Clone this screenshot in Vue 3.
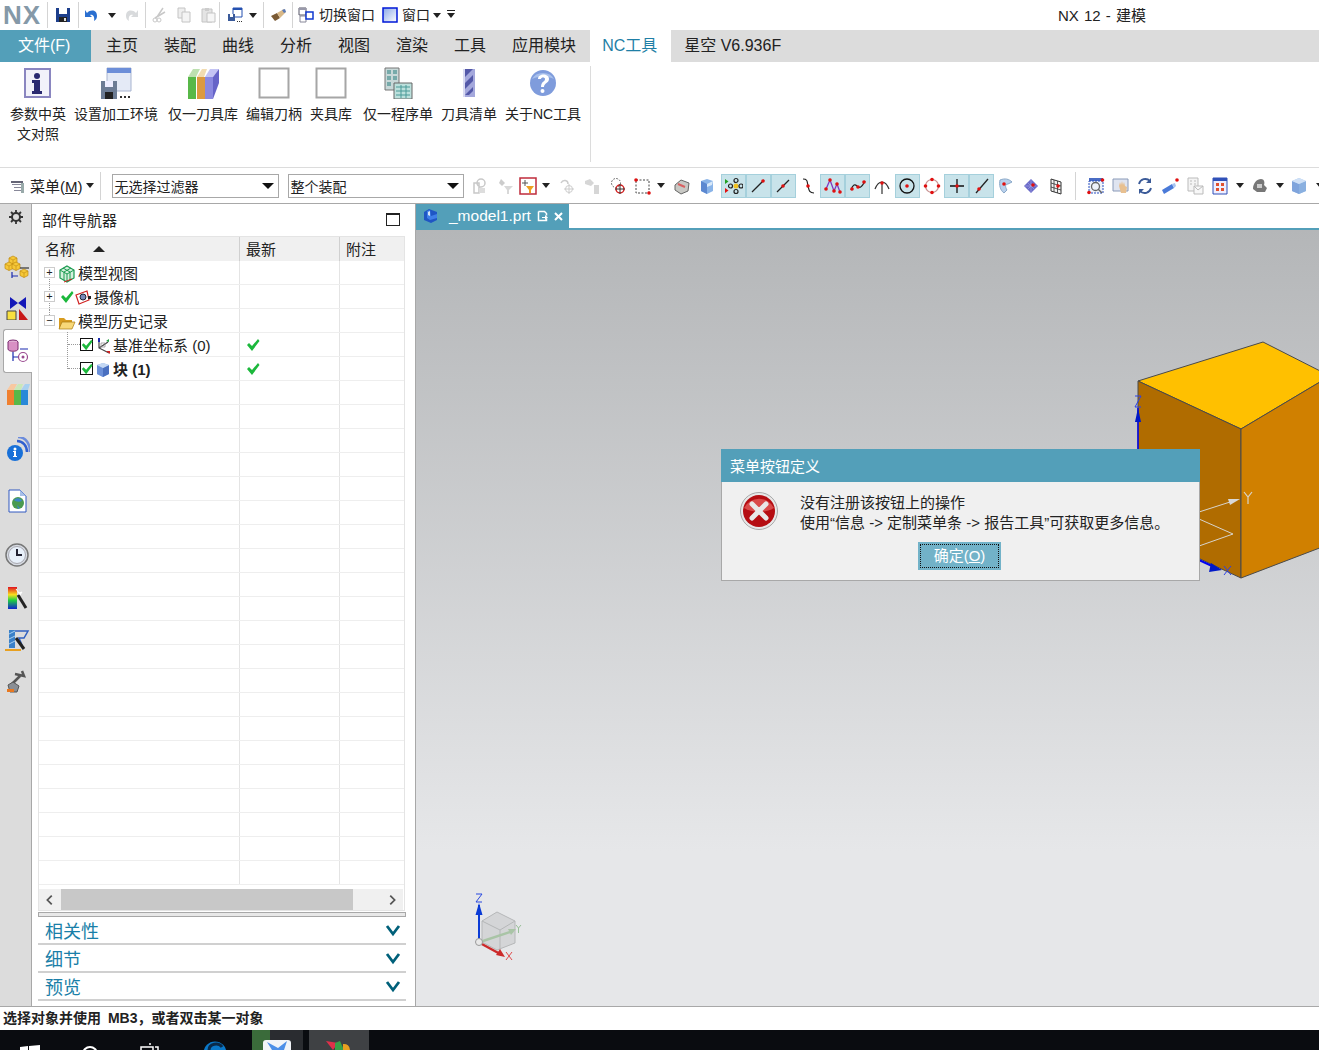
<template>
  <div class="app">
    <!-- title row -->
    <div class="title-row">
      <span class="nx">NX</span>
      <i class="vsep"></i>
      <span class="qa" style="width:30px" v-html="svg(qa.save, 16)"></span>
      <i class="vsep"></i>
      <span class="qa" style="width:26px" v-html="svg(qa.undo, 16)"></span>
      <span class="caret" style="margin:0 1px 0 3px"></span>
      <span class="qa" style="width:28px" v-html="svg(qa.redo, 16)"></span>
      <i class="vsep"></i>
      <span class="qa" style="width:26px" v-html="svg(qa.cut, 16)"></span>
      <span class="qa" style="width:24px" v-html="svg(qa.copy, 16)"></span>
      <span class="qa" style="width:23px" v-html="svg(qa.paste, 16)"></span>
      <i class="vsep"></i>
      <span class="qa" style="width:29px" v-html="svg(qa.win, 16)"></span>
      <span class="caret"></span>
      <i class="vsep" style="margin-left:6px"></i>
      <span class="qa" style="width:28px" v-html="svg(qa.brush, 16)"></span>
      <i class="vsep"></i>
      <span class="qa" style="width:26px" v-html="svg(qa.sw, 16)"></span>
      <span class="qa-label">切换窗口</span>
      <span class="qa" style="width:16px;margin-left:7px" v-html="svg(qa.window, 16)"></span>
      <span class="qa-label" style="margin-left:4px">窗口</span>
      <span class="caret" style="margin-left:3px"></span>
      <span class="caret under" style="margin-left:6px"></span>
      <span class="app-title">NX 12 - 建模</span>
    </div>

    <!-- ribbon tabs -->
    <div class="tabs">
      <div class="tab file">文件(F)</div>
      <div class="tab-list">
        <div v-for="t in tabs" :key="t" class="tab" :class="{ active: t === 'NC工具' }">{{ t }}</div>
      </div>
    </div>

    <!-- ribbon -->
    <div class="ribbon">
      <div class="ribbon-group">
        <div v-for="b in ribbon" :key="b.label" class="rb" :style="{ width: b.w + 'px', marginLeft: (b.ml || 0) + 'px' }">
          <span class="rb-icon" v-html="svg(b.icon, 32, 32)"></span>
          <span class="rb-label" :class="{ one: !b.wrap }">{{ b.label }}</span>
        </div>
      </div>
      <i class="ribbon-sep"></i>
    </div>

    <!-- selection bar -->
    <div class="selbar">
      <span class="cell menu-ico" v-html="svg(tb.menu, 18)"></span>
      <span class="menu-label">菜单(<u>M</u>)</span>
      <span class="caret" style="margin-left:3px"></span>
      <i class="vsep tall"></i>
      <div class="combo" style="width:167px">无选择过滤器<span class="caret big"></span></div>
      <div class="combo" style="width:176px;margin-left:9px">整个装配<span class="caret big"></span></div>
      <div class="tools">
        <template v-for="(c, i) in cells" :key="i">
          <i v-if="c === '|'" class="vsep tall2"></i>
          <span v-else-if="c === 'v'" class="caret dd"></span>
          <span v-else-if="c === 'V'" class="caret dd wide"></span>
          <span v-else class="cell" :class="{ on: c.on }" :style="c.m ? { marginLeft: c.m + 'px' } : null" v-html="svg(tb[c.n], 18)"></span>
        </template>
      </div>
    </div>

    <div class="main">
      <!-- resource bar -->
      <div class="rail">
        <span class="rail-item gear" v-html="svg(rail.gear, 16)"></span>
        <span class="rail-item" style="margin-top:30px" v-html="svg(rail.asm, 26, 24)"></span>
        <span class="rail-item" style="margin-top:17px" v-html="svg(rail.constraint, 26, 24)"></span>
        <span class="rail-item current" style="margin-top:9px" v-html="svg(rail.part, 26, 24)"></span>
        <span class="rail-item" style="margin-top:9px" v-html="svg(rail.lib, 26, 24)"></span>
        <span class="rail-item" style="margin-top:31px" v-html="svg(rail.info, 26, 24)"></span>
        <span class="rail-item" style="margin-top:28px" v-html="svg(rail.web, 26, 24)"></span>
        <span class="rail-item" style="margin-top:30px" v-html="svg(rail.clock, 26, 24)"></span>
        <span class="rail-item" style="margin-top:19px" v-html="svg(rail.color, 26, 24)"></span>
        <span class="rail-item" style="margin-top:18px" v-html="svg(rail.mill, 26, 24)"></span>
        <span class="rail-item" style="margin-top:18px" v-html="svg(rail.robot, 26, 24)"></span>
      </div>

      <!-- part navigator -->
      <div class="nav">
        <div class="nav-head">
          <span>部件导航器</span>
          <span class="maximize"></span>
        </div>
        <div class="tree">
          <div class="tree-row tree-header">
            <div class="c name">名称<span class="sort"></span></div>
            <div class="c">最新</div>
            <div class="c">附注</div>
          </div>
          <div v-for="(r, i) in rows" :key="i" class="tree-row">
            <div class="c name" :style="{ paddingLeft: (r.pad || 0) + 'px' }">
              <template v-if="r.text">
                <i v-if="r.guide" class="guide" :class="r.guide"></i>
                <span v-if="r.box" class="expander">{{ r.box }}</span>
                <span v-if="r.check" class="tick" v-html="svg(rail.tick, 14)"></span>
                <span v-if="r.sq" class="checkbox" v-html="svg(rail.tick, 12)"></span>
                <span class="node-icon" v-html="svg(r.icon, 18)"></span>
                <span :class="{ strong: r.strong }" :style="{ marginLeft: (r.tx || 2) + 'px' }">{{ r.text }}</span>
              </template>
            </div>
            <div class="c">
              <span v-if="r.latest" class="latest" v-html="svg(rail.tick, 14)"></span>
            </div>
            <div class="c"></div>
          </div>
          <div class="hscroll">
            <span class="sb-arrow"><svg width="14" height="14" viewBox="0 0 16 16"><path d="M10 3 5 8l5 5" fill="none" stroke="#555" stroke-width="2" /></svg></span>
            <div class="sb-track"><div class="sb-thumb"></div></div>
            <span class="sb-arrow"><svg width="14" height="14" viewBox="0 0 16 16"><path d="M6 3l5 5-5 5" fill="none" stroke="#555" stroke-width="2" /></svg></span>
          </div>
        </div>
        <div class="splitter"></div>
        <div v-for="s in sections" :key="s" class="section">
          <span>{{ s }}</span>
          <svg width="16" height="13" viewBox="0 0 16 13"><path d="M2 2l6 8 6-8" fill="none" stroke="#00607a" stroke-width="2.8" /></svg>
        </div>
      </div>

      <!-- graphics window -->
      <div class="work">
        <div class="doc-tabs">
          <div class="doc-tab">
            <span class="doc-icon" v-html="svg(qa.blockDoc, 16)"></span>
            <span>_model1.prt</span>
            <svg class="doc-mark" width="12" height="12" viewBox="0 0 12 12"><path d="M1.500 1.500h6l2 2v2M9.500 8.500v2h-8v-9" fill="none" stroke="#fff" stroke-width="1.500" /><path d="M5 7h3V5l3 2.500L8 10V8H5z" fill="#fff" /></svg>
            <svg width="11" height="11" viewBox="0 0 11 11"><path d="M2 2l7 7M9 2l-7 7" stroke="#fff" stroke-width="2" /></svg>
          </div>
        </div>
        <div class="viewport">
          <!-- model: coordinates are the content of the canvas -->
          <svg class="scene" width="903" height="776" viewBox="416 230 903 776">
            <path d="M1138 381 1263 342 1330 376 1241 429z" fill="#ffc000" stroke="#4a4a4a" stroke-width="1" />
            <path d="M1138 381 1241 429V578L1138 530z" fill="#b06c00" stroke="#4a4a4a" stroke-width="1" />
            <path d="M1241 429 1330 376V544L1241 578z" fill="#d08000" stroke="#4a4a4a" stroke-width="1" />
            <path d="M1138 408V450" stroke="#0000f0" stroke-width="1.5" />
            <path d="M1138 408 1135 422H1141z" fill="#0018c8" />
            <path d="M1135 396h6l-6 11h6" fill="none" stroke="#2a40e8" stroke-width="1" />
            <path d="M1199 512 1230 502" stroke="#d8d4cc" stroke-width="1" />
            <path d="M1228 499 1240 499 1230 505z" fill="#d8d8d8" />
            <path d="M1199 519 1233 534 1199 546" fill="none" stroke="#d8d4cc" stroke-width="1" />
            <path d="M1244 492l4 5 4-5M1248 497v7" fill="none" stroke="#d8d4cc" stroke-width="1.200" />
            <path d="M1199 560 1212 566" stroke="#0000f0" stroke-width="2" />
            <path d="M1211 563 1222 570 1209 572z" fill="#0018c8" />
            <path d="M1224 566 1231 575M1231 566 1224 575" stroke="#2a40e8" stroke-width="1" />

            <!-- triad -->
            <path d="M482 921 497 912 515 921V943L497 950 482 942z" fill="#cfd1d2" fill-opacity=".8" stroke="#b5b7b8" />
            <path d="M482 921 500 930 515 921M500 930V950" fill="none" stroke="#b5b7b8" />
            <path d="M480 942 513 931" stroke="#a9c4a6" stroke-width="2.500" />
            <path d="M508 929 516 929 511 935z" fill="#a9c4a6" />
            <path d="M516 925l2.500 3 2.500-3M518.500 928v5" fill="none" stroke="#98bf98" stroke-width="1" />
            <path d="M479 942V905" stroke="#0a3bd6" stroke-width="2" />
            <path d="M479 903 475.500 915H482.500z" fill="#0a3bd6" />
            <path d="M476 894h6l-6 8h6" fill="none" stroke="#2848e0" stroke-width="1" />
            <path d="M480 943 502 955" stroke="#cc2a2a" stroke-width="2.500" />
            <path d="M505 957 496 955 500 949z" fill="#cc2a2a" />
            <path d="M506 952 512 960M512 952 506 960" stroke="#e04a4a" stroke-width="1" />
            <circle cx="479" cy="942" r="3.500" fill="#e8e8e8" stroke="#999" />
          </svg>

          <!-- message box -->
          <div class="dialog">
            <div class="dialog-title">菜单按钮定义</div>
            <div class="dialog-body">
              <svg class="err" width="40" height="40" viewBox="0 0 40 40">
                <circle cx="20" cy="20" r="18.500" fill="#e8e8e8" stroke="#a8a8a8" />
                <circle cx="20" cy="20" r="16" fill="#b50d12" />
                <path d="M5 17a16 14 0 0 1 30 0c-8 5-22 5-30 0z" fill="#d94a4a" />
                <path d="M13 13l14 14M27 13 13 27" stroke="#e8e8e8" stroke-width="5" stroke-linecap="round" />
              </svg>
              <div class="dialog-text">
                <div>没有注册该按钮上的操作</div>
                <div>使用“信息 -&gt; 定制菜单条 -&gt; 报告工具”可获取更多信息。</div>
              </div>
            </div>
            <div class="dialog-actions">
              <button class="ok"><span>确定(<u>O</u>)</span></button>
            </div>
          </div>
        </div>
      </div>
    </div>

    <div class="status">选择对象并使用 MB3，或者双击某一对象</div>

    <!-- taskbar, cut off by the capture -->
    <div class="taskbar">
      <svg class="tk" style="left:20px;top:15px" width="20" height="8" viewBox="0 0 20 8"><path d="M0 2 8 1v8H0zM9 1l11-1v9H9z" fill="#fff" /></svg>
      <svg class="tk" style="left:81px;top:15px" width="18" height="8" viewBox="0 0 18 8"><circle cx="9" cy="9" r="7" fill="none" stroke="#fff" stroke-width="2" /></svg>
      <svg class="tk" style="left:140px;top:12px" width="20" height="8" viewBox="0 0 20 8"><path d="M1 8V5h12V8M9 2h2M15 5h3v3" fill="none" stroke="#fff" stroke-width="1.500" /></svg>
      <svg class="tk" style="left:203px;top:11px" width="24" height="9" viewBox="0 0 24 9"><circle cx="12" cy="12" r="11.500" fill="#0a78c8" /><path d="M6 9a7 6 0 0 1 13-3" fill="none" stroke="#0a2a48" stroke-width="3" /></svg>
      <div class="tk-app mail">
        <svg width="30" height="20" viewBox="0 0 30 20"><rect x="1" y="10" width="28" height="16" rx="3" fill="#f2f4f8" /><path d="M5 12l11 6 9-7-3 9h-12z" fill="#4d8fe8" /></svg>
      </div>
      <div class="tk-app nxapp">
        <svg width="34" height="20" viewBox="0 0 34 20"><path d="M4 11l12 2-5 7z" fill="#e0304a" /><path d="M13 13l5-2 4 9h-9z" fill="#38a048" /><path d="M21 14a6 6 0 0 1 7 6h-7z" fill="#e8a020" /></svg>
      </div>
    </div>
  </div>
</template>

<script setup>
const svg = (inner, w, h = w) => {
  const vb = w === 32 ? '0 0 32 32' : w === 26 ? '0 0 26 24' : w === 18 ? '0 0 18 18' : w === 12 ? '0 0 14 14' : w === 14 ? '0 0 14 14' : '0 0 16 16'
  return `<svg width="${w}" height="${h}" viewBox="${vb}" style="display:block">${inner}</svg>`
}

const tabs = ['主页', '装配', '曲线', '分析', '视图', '渲染', '工具', '应用模块', 'NC工具', '星空 V6.936F']
const sections = ['相关性', '细节', '预览']

const qa = {
  save: '<path d="M1 1h14v14H1z" fill="#1d3f8c"/><path d="M4 1h8v6H4z" fill="#fff"/><path d="M4 10h8v5H4z" fill="#222"/><path d="M9 11h2v3H9z" fill="#ddd"/>',
  undo: '<path d="M3 6c4-4 10-3 10 3 0 2-1 4-3 5 1-4-1-7-4-6l2 2H1V3z" fill="#2a6fd0"/>',
  redo: '<path d="M13 6C9 2 3 3 3 9c0 2 1 4 3 5-1-4 1-7 4-6L8 10h7V3z" fill="#d8dadc"/>',
  cut: '<path d="M12 1 6 10M14 5 4 11" stroke="#c8c8c8" stroke-width="1.500"/><circle cx="4" cy="13" r="2" fill="none" stroke="#c8c8c8"/><circle cx="8" cy="13" r="2" fill="none" stroke="#c8c8c8"/>',
  copy: '<path d="M2 1h7v10H2z" fill="#eee" stroke="#c4c4c4"/><path d="M6 5h8v10H6z" fill="#f4f4f4" stroke="#c4c4c4"/>',
  paste: '<path d="M2 2h10v13H2z" fill="#e4e4e4" stroke="#c4c4c4"/><path d="M5 1h4v3H5z" fill="#ccc"/><path d="M7 6h8v9H7z" fill="#f6f6f6" stroke="#c4c4c4"/>',
  win: '<path d="M6 1h9v9H6z" fill="#fff" stroke="#2450b0"/><path d="M6 1h9v2H6z" fill="#2450b0"/><path d="M1 7h7v7H1z" fill="#3a5a9a"/><path d="M3 7h3v3H3z" fill="#fff"/><path d="M10 14h1v1h-1zM12 14h1v1h-1zM14 14h1v1h-1z" fill="#333"/>',
  brush: '<path d="M1 9 7 6l3 5-5 3z" fill="#7a5a34"/><path d="M7 6l7-4 2 3-6 6z" fill="#d8b888"/><path d="M12 3l3-1 1 3-2 1z" fill="#5a7ab8"/>',
  sw: '<path d="M1 1h7v7H1z" fill="#fff" stroke="#556"/><path d="M1 1h7v2H1z" fill="#99a"/><path d="M2 9h6v6H2z" fill="#fff" stroke="#889"/><path d="M8 5h7v7H8z" fill="#fff" stroke="#1038d0" stroke-width="1.500"/>',
  window: '<path d="M1 1h14v14H1z" fill="url(#wg)" stroke="#0018d8" stroke-width="1.500"/><defs><linearGradient id="wg" x1="0" y1="0" x2="1" y2="1"><stop offset="0" stop-color="#8aa8e8"/><stop offset="1" stop-color="#fff"/></linearGradient></defs>',
  blockDoc: '<path d="M1 4 6 1l8 3v8l-6 3-7-3z" fill="#1f56c4"/><path d="M4 3l3-1 1 6 6-2v4l-7 2-3-2z" fill="#3f7fe8"/><path d="M5 4l2-1v5L5 7z" fill="#d8e6f8"/>'
}

const ribbonIcons = {
  info: '<path d="M3 2h25v28H3z" fill="#f2f2fa" stroke="#8a86c0" stroke-width="2"/><circle cx="15" cy="9" r="3" fill="#2a2a70"/><path d="M10 13h8v11h2v3H10v-3h2v-8h-2z" fill="#2a2a70"/>',
  env: '<path d="M7 1h24v23H7z" fill="#e4eaf6" stroke="#a8b4d0"/><path d="M7 1h24v5H7z" fill="#6c8ed8"/><path d="M1 14h16v18H1z" fill="#6c7c94"/><path d="M5 14h8v6H5z" fill="#eef"/><path d="M5 25h8v7H5z" fill="#222"/><path d="M20 29h2v2h-2zM24 29h2v2h-2zM28 29h2v2h-2z" fill="#333"/>',
  lib: '<path d="M1 10h8v22H1z" fill="#58b848"/><path d="M1 10l5-8h7l-4 8z" fill="#bde0b0"/><path d="M10 10h8v22h-8z" fill="#dc9a40"/><path d="M10 10l5-8h5l-3 8z" fill="#f2dcb0"/><path d="M18 10h8v22h-8z" fill="#8a88e0"/><path d="M18 10l5-8h9l-6 8z" fill="#c4c4f4"/><path d="M26 10l6-8v14l-6 16z" fill="#6664c8"/>',
  blank: '<path d="M1.500 1.500h29v29h-29z" fill="#fff" stroke="#a6a6a6" stroke-width="2"/>',
  prog: '<path d="M3 1h14v22H3z" fill="#c8d8d8" stroke="#777"/><path d="M5 3h4v4H5zM11 3h4v4h-4zM5 9h4v4H5zM11 9h4v4h-4zM5 15h4v4H5z" fill="#7aa"/><path d="M12 16h18v16H12z" fill="#bce0dc" stroke="#666"/><path d="M14 20h14M14 24h14M14 28h14M19 18v13M24 18v13" stroke="#4a9a98"/>',
  list: '<path d="M10 2h12v28H10z" fill="#a4a8dc"/><path d="M12 2h8l-8 8zM20 8l-8 8v6l8-8zM20 20l-8 8h4l4-4z" fill="#5358a8"/><path d="M10 2h2v28h-2z" fill="#d8daf2"/>',
  help: '<circle cx="16" cy="16" r="13" fill="#7f9cdc"/><path d="M5 12a12 10 0 0 1 22 0c-6-3-16-3-22 0z" fill="#a8c0ec"/><path d="M11 12c0-6 11-6 11 0 0 4-5 4-5 8h-3c0-6 4-5 4-8 0-2-4-2-4 0z" fill="#fff"/><circle cx="15.500" cy="24" r="2" fill="#fff"/>'
}

const ribbon = [
  { label: '参数中英文对照', w: 56, wrap: true, icon: ribbonIcons.info },
  { label: '设置加工环境', w: 84, icon: ribbonIcons.env },
  { label: '仅一刀具库', w: 70, ml: 2, icon: ribbonIcons.lib },
  { label: '编辑刀柄', w: 56, icon: ribbonIcons.blank },
  { label: '夹具库', w: 42, icon: ribbonIcons.blank },
  { label: '仅一程序单', w: 70, ml: 3, icon: ribbonIcons.prog },
  { label: '刀具清单', w: 56, icon: ribbonIcons.list },
  { label: '关于NC工具', w: 76, icon: ribbonIcons.help }
]

const R = '<circle cx="X" cy="Y" r="1.800" fill="#e01010"/>'
const dot = (x, y) => R.replace('X', x).replace('Y', y)
const tb = {
  menu: '<path d="M2 4h12v2H2z" fill="#667"/><path d="M3 7h9v1H3zM5 10h9v1H5zM5 13h9v1H5z" fill="#889"/><path d="M12 6h3v10h-3z" fill="#9aa"/>',
  g1: '<path d="M2 6h5v10H2zM9 2a4 4 0 1 1 0 8 4 4 0 0 1 0-8z" fill="none" stroke="#c8c8c8" stroke-width="1.500"/><path d="M7 11h6v5H7z" fill="#ddd"/>',
  g2: '<path d="M4 2 8 6 5 9 2 6z" fill="#ccc"/><path d="M7 9h9l-4 4v4h-2v-4z" fill="#d8d8d8"/>',
  filter: '<path d="M1 1h16v16H1z" fill="#fff" stroke="#c02c3c" stroke-width="1.500"/><path d="M6 3v6M3 6h6" stroke="#555"/><path d="M7 9h8l-3 4v3h-2v-3z" fill="#eda020"/>',
  g3: '<path d="M3 6c2-4 7-3 7 1" fill="none" stroke="#ccc" stroke-width="1.500"/><circle cx="11" cy="12" r="3.500" fill="none" stroke="#ccc"/><path d="M11 7v10M6 12h10" stroke="#ccc"/>',
  g4: '<path d="M2 4l5-2 4 4-3 3-6-2zM11 8h5v9h-5z" fill="#d6d6d6"/>',
  target: '<circle cx="7" cy="6" r="4.500" fill="none" stroke="#555" stroke-dasharray="1.500 1.500"/><circle cx="11" cy="12" r="4" fill="none" stroke="#d02020" stroke-width="1.500"/><path d="M11 7v10M6 12h10" stroke="#333"/>',
  rect: '<path d="M2 3h13v13H2z" fill="none" stroke="#444" stroke-dasharray="2 1.500"/>' + dot(2, 3) + dot(15, 16),
  gauge: '<path d="M2 8 8 3l8 3-1 8-7 3-6-4z" fill="#c8c8c4" stroke="#666"/><path d="M5 7l7 3" stroke="#d86060" stroke-width="2"/>',
  solid: '<path d="M3 4 9 2l6 2v10l-6 3-6-3z" fill="#8ab4e8"/><path d="M3 4l6 3v10l-6-3z" fill="#5c88d0"/><path d="M9 7l6-3-1 4-5 2z" fill="#d8e8f8"/>',
  cross: '<circle cx="11" cy="9" r="2.500" fill="#f0c020"/><circle cx="11" cy="3.500" r="2" fill="none" stroke="#222" stroke-width="1.200"/><circle cx="11" cy="14.500" r="2" fill="none" stroke="#222" stroke-width="1.200"/><circle cx="5.500" cy="9" r="2" fill="none" stroke="#222" stroke-width="1.200"/><circle cx="16" cy="9" r="2" fill="none" stroke="#222" stroke-width="1.200"/><path d="M0 2v5l3.500-2.500z" fill="#20a020"/><path d="M0 11v5l3.500-2.500z" fill="#e01010"/>',
  line: '<path d="M3 15 15 3" stroke="#222" stroke-width="1.300"/>' + dot(14, 4),
  lineMid: '<path d="M3 15 15 3" stroke="#222" stroke-width="1.300"/>' + dot(9, 9),
  curve: '<path d="M4 2c5 0 4 3 5 7s1 7 6 7" fill="none" stroke="#222" stroke-width="1.200"/>' + dot(9, 9),
  poly: '<path d="M2 12 6 3l4 11 3-7 3 8" fill="none" stroke="#8038c0" stroke-width="1.300"/>' + dot(6, 3) + dot(10, 14) + dot(13, 7) + dot(2, 12) + dot(16, 15),
  wave: '<path d="M2 13c2-6 4-6 6-4s4 3 8-5" fill="none" stroke="#222" stroke-width="1.200"/>' + dot(3, 12) + dot(9, 10) + dot(15, 5),
  fork: '<path d="M2 12C4 7 7 5 9 5s5 2 7 7M9 5v12" fill="none" stroke="#333" stroke-width="1.200"/>' + dot(9, 6),
  centre: '<circle cx="9" cy="9" r="7" fill="none" stroke="#111" stroke-width="1.300"/>' + dot(9, 9),
  ring: '<circle cx="9" cy="9" r="6.500" fill="none" stroke="#c89090" stroke-width="1.200"/>' + dot(9, 2.5) + dot(2.5, 9) + dot(15.5, 9) + dot(9, 15.5),
  plus: '<path d="M9 2v14M2 9h14" stroke="#111" stroke-width="1.300"/>' + dot(9, 9),
  slant: '<path d="M3 16 15 2" stroke="#222" stroke-width="1.300"/>' + dot(6, 12),
  face: '<path d="M3 3c5-2 9-1 12 2l-4 2c-3 0-3 3-1 6l-3 3C3 13 2 8 3 3z" fill="#b8d0ec" stroke="#8aa8c8"/>' + dot(7, 7),
  diamond: '<path d="M9 2l7 7-7 7-7-7z" fill="#6a6ac8"/><path d="M5.500 5.500l7 7M12.500 5.500l-7 7M2 9h14M9 2v14" stroke="#a8a8e8" stroke-width=".6"/>' + dot(11, 8),
  mesh: '<path d="M4 2l10 3v12L4 14z" fill="#f4f4f4" stroke="#333"/><path d="M7 3v12M10.500 4v12M4 6l10 3M4 10l10 3" stroke="#333" stroke-width=".8"/>' + dot(11, 9),
  v1: '<path d="M2 1h14v3H2z" fill="#4a6cc4"/><path d="M2 4h14v12H2z" fill="#eef2fa" stroke="#2a50c0" stroke-dasharray="2 1"/><circle cx="8.500" cy="9.500" r="4" fill="none" stroke="#666" stroke-width="1.300"/><path d="M11 12l4 4" stroke="#666" stroke-width="1.500"/>' + dot(15.5, 3) + dot(2, 15.5),
  v2: '<path d="M1 2h15v12H1z" fill="#dfe4f0" stroke="#8a9ab8"/><path d="M7 9l1-4 1 3 1-4 1 4 1-3 1 4 2 1-1 6H9z" fill="#e8c090"/>',
  v3: '<path d="M3 7a6.500 6.500 0 0 1 11-3M15 11a6.500 6.500 0 0 1-11 3" fill="none" stroke="#3a5a98" stroke-width="1.800"/><path d="M15 1v5h-5zM3 17v-5h5z" fill="#3a5a98"/>',
  v4: '<path d="M1 13l10-6 2 4-10 6z" fill="#4a7ad8"/><path d="M11 7l3-1 1 3-2 2z" fill="#a8c4f0"/>' + dot(16, 3),
  v5: '<path d="M2 1h10v13H2z" fill="#f4f4f4" stroke="#bbb"/><path d="M8 9h9v8H8z" fill="#f8f8f8" stroke="#bbb"/><path d="M4 4h2M8 4h2M4 7h2M8 7h2M8 9l4 4 5-4" fill="none" stroke="#bbb"/>',
  v6: '<path d="M2 1h14v16H2z" fill="#eef" stroke="#3050b8"/><path d="M2 1h14v3H2z" fill="#3050b8"/><path d="M5 6h3v3H5zM10 6h3v3h-3zM5 11h3v3H5zM10 11h3v3h-3z" fill="#e05030"/>',
  v7: '<path d="M2 12c0-6 4-10 8-10 3 0 4 3 3 6l3 3-2 4H6z" fill="#777"/><path d="M6 7h5v4H6z" fill="#ccc"/>',
  v8: '<path d="M2 4 9 1l7 3v10l-7 3-7-3z" fill="#a8c8ec"/><path d="M2 4l7 3v10l-7-3z" fill="#7fa4dc"/><path d="M9 7l7-3v10l-7 3z" fill="#8ab0e0"/><path d="M2 4 9 1l7 3-7 3z" fill="#cfe0f6"/>'
}

const on = (n, m) => ({ n, on: true, m })
const p = (n, m) => ({ n, m })
const cells = [
  p('g1'), p('g2'), p('filter', -2), 'v', p('g3'), p('g4'), p('target', 1.5), p('rect'), 'v', p('gauge'), p('solid'),
  on('cross', 2), on('line'), on('lineMid'), p('curve'), on('poly'), on('wave'), p('fork'), on('centre'), p('ring'), on('plus'), on('slant'),
  p('face'), p('diamond'), p('mesh'), '|', p('v1'), p('v2'), p('v3'), p('v4'), p('v5'), p('v6'), 'V', p('v7'), 'V', p('v8'), 'V'
]

const hex = (x, y) => `<path d="M${x} ${y - 4}l4 2v4.500l-4 2-4-2V${y - 2}z" fill="#f6c838" stroke="#c08a10" stroke-width=".7"/><path d="M${x - 4} ${y - 2}l4 2 4-2M${x} ${y}v4.500" fill="none" stroke="#c08a10" stroke-width=".6"/>`
const rail = {
  gear: '<circle cx="8" cy="8" r="4" fill="none" stroke="#333" stroke-width="2"/><path d="M8 1v3M8 12v3M1 8h3M12 8h3M3 3l2 2M11 11l2 2M13 3l-2 2M5 11l-2 2" stroke="#333" stroke-width="1.800"/>',
  asm: hex(9, 5) + hex(5, 11) + hex(12, 11) + '<path d="M16 13h9" stroke="#111"/><path d="M8 17v6M8 21h6" fill="none" stroke="#1a2ab0" stroke-width="1.200"/>' + hex(20, 18),
  constraint: '<path d="M6 1l8 6-8 6zM22 1l-8 6 8 6z" fill="#1418b8"/><path d="M3 15h9v9H3z" fill="#f8e040" stroke="#444"/><path d="M15 13l9 11h-9z" fill="#c81818"/>',
  part: '<ellipse cx="8" cy="3" rx="5" ry="2" fill="#e0b0d4" stroke="#7a2a70"/><path d="M3 3v7c0 3 10 3 10 0V3" fill="#d890c4" stroke="#7a2a70"/><path d="M8 13v9M8 18h5M15 10h8" stroke="#1a2ab0" stroke-width="1.200"/><circle cx="18" cy="18" r="4.500" fill="none" stroke="#9a4a90" stroke-width="1.200"/><circle cx="18" cy="18" r="1.500" fill="#9a4a90"/>',
  lib: '<path d="M3 8h7v15H3z" fill="#f08030"/><path d="M3 8l4-6h6l-3 6z" fill="#f8c8a0"/><path d="M10 8h7v15h-7z" fill="#58b848"/><path d="M10 8l4-6h5l-2 6z" fill="#c8e8b8"/><path d="M17 8h7v15h-7z" fill="#2888d8"/><path d="M17 8l4-6h5l-2 6z" fill="#a8d0f0"/>',
  info: '<path d="M13 4c6 0 10 5 10 11" fill="none" stroke="#3060d0" stroke-width="2.500"/><path d="M14 0c8 0 12 7 12 15" fill="none" stroke="#6c8cdc" stroke-width="2.500"/><circle cx="11" cy="16" r="8" fill="#1870d8"/><circle cx="11" cy="12" r="1.500" fill="#fff"/><path d="M9 14h3v5h1v1H9v-1h1v-4H9z" fill="#fff"/>',
  web: '<path d="M5 1h11l6 6v16H5z" fill="#fff" stroke="#3058c0"/><path d="M16 1v6h6z" fill="#a8c0e8"/><circle cx="14" cy="14" r="6" fill="#4a9a50"/><path d="M10 11c3-3 7-2 8 1-3 1-6 1-8-1zM13 16l3 3-2 1z" fill="#3c86c8"/>',
  clock: '<circle cx="13" cy="12" r="11" fill="#d8dce4" stroke="#777" stroke-width="1.500"/><circle cx="13" cy="12" r="8.500" fill="#e8f0fa" stroke="#a8a8b0"/><path d="M13 6v6h5" fill="none" stroke="#223" stroke-width="2"/>',
  color: '<defs><linearGradient id="rb" x1="0" y1="0" x2="0" y2="1"><stop offset="0" stop-color="#e01020"/><stop offset=".35" stop-color="#f8e020"/><stop offset=".6" stop-color="#20d040"/><stop offset="1" stop-color="#1020d0"/></linearGradient></defs><path d="M4 1h9v22H4z" fill="url(#rb)"/><path d="M14 9l8 13" stroke="#222" stroke-width="3"/><path d="M12 3l3 4 3-1-2 3" fill="#fff" stroke="#fff"/>',
  mill: '<path d="M5 2h6v18H5z" fill="#3a80c8"/><path d="M5 6l6-3M5 11l6-3M5 16l6-3" stroke="#a8d0f0"/><path d="M1 22h16" stroke="#e8a020" stroke-width="2"/><path d="M11 3h13l-4 7h-5l3 7" fill="none" stroke="#3060c0" stroke-width="1.500"/><path d="M12 10l8 11" stroke="#222" stroke-width="3"/>',
  robot: '<path d="M8 14l8-8M11 4l9 2-2-5" fill="none" stroke="#555" stroke-width="2.500"/><path d="M4 15l5-3 6 4-2 6H6z" fill="#8a8e94" stroke="#555"/><path d="M3 19h7v3H3z" fill="#e87820"/>',
  tick: '<path d="M1 7l2-2 3 3 6-7 1.500 2L6 13z" fill="#1cb83c"/>'
}

const node = {
  view: '<path d="M9 1l7 4v8l-7 4-7-4V5z" fill="#d4f0dc" stroke="#1a9a50" stroke-width="1.200"/><path d="M2 5l7 4 7-4M9 9v8M5 3l7 4v8M13 3 6 7v8" fill="none" stroke="#1a9a50"/><path d="M6 17l8-3" stroke="#d02020"/>',
  cam: '<path d="M1 6l11-4 2 9-10 4z" fill="#fff" stroke="#d02020" stroke-width="1.200"/><circle cx="8" cy="8" r="3" fill="#7a88b8" stroke="#223"/><path d="M13 7h3v3h-3z" fill="#222"/>',
  folder: '<path d="M1 5h5l2 2h6v9H1z" fill="#d89c20"/><path d="M1 16l3-7h13l-3 7z" fill="#f8d878" stroke="#a87810" stroke-width=".7"/>',
  csys: '<path d="M5 2v9l10 5M5 11l9-6" fill="none" stroke="#444" stroke-width="1.200"/><path d="M4 1h2v4H4z" fill="#1a2ab0"/><path d="M12 4l3-2v3z" fill="#20a040"/><path d="M12 14l4 3v-3z" fill="#d02020"/><path d="M7 6h4v4H7z" fill="none" stroke="#888" stroke-width=".7"/>',
  block: '<path d="M3 4l6-2 6 2v9l-6 3-6-3z" fill="#8ab0e8"/><path d="M3 4l6 3v9l-6-3z" fill="#6c90d8"/><path d="M9 7l6-3v9l-6 3z" fill="#4a70c0"/><path d="M3 4l6-2 6 2-6 3z" fill="#c4d8f4"/>'
}

const rows = [
  { text: '模型视图', box: '+', icon: node.view, pad: 5, guide: 'g-a' },
  { text: '摄像机', box: '+', check: true, icon: node.cam, pad: 5, guide: 'g-b', tx: 1 },
  { text: '模型历史记录', box: '−', icon: node.folder, pad: 5, guide: 'g-c' },
  { text: '基准坐标系 (0)', sq: true, icon: node.csys, pad: 41, latest: true, guide: 'g-d', tx: 1 },
  { text: '块 (1)', sq: true, icon: node.block, pad: 41, latest: true, strong: true, guide: 'g-e', tx: 1 },
  ...Array.from({ length: 21 }, () => ({}))
]
</script>

<style scoped>
.app {
  width: 1319px;
  height: 1050px;
  overflow: hidden;
  background: #fff;
  color: #222;
  font: 14px "Liberation Sans", "Noto Sans CJK SC", sans-serif;
  display: flex;
  flex-direction: column;
}
.title-row {
  height: 30px;
  display: flex;
  align-items: center;
  position: relative;
  flex: none;
}
.nx {
  width: 47px;
  padding-left: 3px;
  box-sizing: border-box;
  font-size: 26px;
  font-weight: 700;
  color: #8599a8;
  letter-spacing: 1px;
}
.vsep {
  width: 1px;
  height: 26px;
  background: #d4d4d4;
  flex: none;
}
.qa {
  display: flex;
  justify-content: center;
  flex: none;
}
.qa-label {
  color: #222;
  white-space: nowrap;
  position: relative;
  top: -1px;
}
.caret {
  display: inline-block;
  width: 0;
  height: 0;
  border: 4px solid transparent;
  border-top: 5px solid #222;
  border-bottom: 0;
  flex: none;
}
.caret.big {
  border-width: 6px 6px 0;
  border-top-color: #111;
}
.caret.under {
  position: relative;
}
.caret.under::before {
  content: "";
  position: absolute;
  left: -4px;
  top: -8px;
  width: 8px;
  height: 1px;
  background: #222;
}
.app-title {
  position: absolute;
  left: 1058px;
  top: 4px;
  font-size: 15px;
  word-spacing: 1px;
}
.tabs {
  height: 32px;
  background: #dcdcdc;
  display: flex;
  flex: none;
  font-size: 16px;
}
.tab {
  padding: 0 13px;
  line-height: 32px;
  white-space: nowrap;
}
.tab-list {
  display: flex;
  margin-left: 2px;
}
.tab.file {
  width: 91px;
  box-sizing: border-box;
  padding: 0 0 0 18px;
  background: #539fb9;
  color: #fff;
}
.tab.active {
  background: #fff;
  color: #1f7fa6;
  margin-left: 1px;
  padding: 0 14px 0 12px;
}
.ribbon {
  height: 105px;
  display: flex;
  border-bottom: 1px solid #dcdcdc;
  flex: none;
}
.ribbon-group {
  display: flex;
  gap: 8px;
  padding: 5px 0 0 10px;
  width: 590px;
  box-sizing: border-box;
}
.rb {
  display: flex;
  flex-direction: column;
  align-items: center;
  flex: none;
  text-align: center;
  line-height: 20px;
}
.rb-icon {
  height: 32px;
  margin-bottom: 5px;
}
.rb-label {
  display: block;
  word-break: break-all;
}
.rb-label.one {
  white-space: nowrap;
}
.ribbon-sep {
  width: 1px;
  height: 96px;
  margin-top: 4px;
  background: #dcdcdc;
}
.selbar {
  height: 36px;
  display: flex;
  align-items: center;
  border-bottom: 1px solid #a8a8a8;
  box-sizing: border-box;
  flex: none;
}
.menu-ico {
  width: 18px;
  margin-left: 9px;
}
.menu-label {
  margin-left: 3px;
  font-size: 15px;
  white-space: nowrap;
}
.vsep.tall {
  height: 28px;
  margin: 0 11px 0 6px;
}
.vsep.tall2 {
  height: 28px;
  margin: 0 7px;
}
.combo {
  height: 24px;
  border: 1px solid #a8a8a8;
  box-sizing: border-box;
  display: flex;
  align-items: center;
  justify-content: space-between;
  padding: 0 4px 0 2px;
  background: #fff;
  flex: none;
}
.tools {
  display: flex;
  align-items: center;
  margin-left: 5px;
  flex: none;
}
.cell {
  width: 24.800px;
  height: 24px;
  display: flex;
  align-items: center;
  justify-content: center;
  box-sizing: border-box;
  flex: none;
}
.cell.menu-ico {
  width: 18px;
}
.cell.on {
  background: #c8e3ea;
  border: 1px solid #a5d0dc;
}
.caret.dd {
  margin: 0 5px 0 1px;
}
.caret.dd.wide {
  margin: 0 3px 0 4px;
}
.main {
  flex: 1;
  display: flex;
  min-height: 0;
  border-bottom: 1px solid #a8a8a8;
}
.rail {
  width: 32px;
  background: #dcdcdc;
  border-right: 1px solid #a8a8a8;
  box-sizing: border-box;
  display: flex;
  flex-direction: column;
  align-items: center;
  flex: none;
}
.rail-item {
  height: 24px;
  margin-left: 3px;
}
.rail-item.gear {
  height: 16px;
  margin: 5px 0 0;
}
.rail-item.current {
  align-self: flex-start;
  width: 29px;
  height: 44px;
  padding: 9px 0 0 1px;
  box-sizing: border-box;
  background: #fff;
  border: 1px solid #a8a8a8;
  border-right: 0;
  border-radius: 3px 0 0 3px;
}
.nav {
  width: 384px;
  padding: 0 9px 0 6px;
  box-sizing: border-box;
  border-right: 1px solid #a8a8a8;
  display: flex;
  flex-direction: column;
  flex: none;
  background: #fff;
}
.nav-head {
  height: 32px;
  padding: 0 0 2px 4px;
  box-sizing: border-box;
  font-size: 15px;
  display: flex;
  align-items: center;
  justify-content: space-between;
  flex: none;
}
.maximize {
  width: 14px;
  height: 13px;
  box-sizing: border-box;
  border: 1px solid #222;
  border-top-width: 2px;
  margin-right: 6px;
}
.tree {
  border: 1px solid #e4e4e4;
  width: 367px;
  box-sizing: border-box;
  flex: none;
}
.tree-row {
  display: grid;
  grid-template-columns: 201px 100px 64px;
  height: 24px;
  border-bottom: 1px solid #eee;
  box-sizing: border-box;
}
.tree-header {
  background: #f0f0f0;
  border-bottom: 0;
}
.tree-header .c {
  padding-bottom: 1px;
  border-right-color: #d0d0d0;
}
.c {
  display: flex;
  align-items: center;
  border-right: 1px solid #e4e4e4;
  box-sizing: border-box;
  padding-left: 6px;
  font-size: 15px;
  white-space: nowrap;
  position: relative;
}
.c:last-child {
  border-right: 0;
}
.sort {
  display: inline-block;
  margin-left: 18px;
  border: 6px solid transparent;
  border-bottom: 6px solid #222;
  border-top: 0;
}
.expander {
  width: 11px;
  height: 11px;
  line-height: 9px;
  box-sizing: border-box;
  border: 1px solid #ccc;
  font-size: 11px;
  text-align: center;
  margin-right: 3px;
  background: #fff;
  flex: none;
  position: relative;
}
.tick {
  margin: 0 1px 0 2px;
  flex: none;
}
.checkbox {
  width: 13px;
  height: 13px;
  box-sizing: border-box;
  border: 1.500px solid #111;
  margin-right: 1px;
  flex: none;
  background: #fff;
}
.node-icon {
  flex: none;
  position: relative;
  top: 1px;
}
.strong {
  font-weight: 700;
}
.latest {
  margin-top: 1px;
}
.guide {
  position: absolute;
  border-left: 1px dotted #999;
}
.guide.g-a {
  left: 10px;
  top: 16px;
  height: 9px;
}
.guide.g-b {
  left: 10px;
  top: 0;
  height: 25px;
}
.guide.g-c {
  left: 10px;
  top: 0;
  height: 6px;
}
.guide.g-d {
  left: 28px;
  top: -1px;
  height: 25px;
}
.guide.g-d::after,
.guide.g-e::after {
  content: "";
  position: absolute;
  left: 0;
  top: 12px;
  width: 12px;
  border-top: 1px dotted #999;
}
.guide.g-e {
  left: 28px;
  top: -1px;
  height: 13px;
}
.hscroll {
  display: flex;
  height: 21px;
  margin: 4px 1px 0 0;
  background: #f0f0f0;
  align-items: center;
}
.sb-arrow {
  width: 22px;
  display: flex;
  justify-content: center;
  flex: none;
}
.sb-track {
  flex: 1;
  height: 100%;
}
.sb-thumb {
  width: 292px;
  height: 100%;
  background: #c8c8c8;
}
.splitter {
  height: 5px;
  margin-top: 1px;
  box-sizing: border-box;
  border: 1px solid #a8a8a8;
  background: #e8e8e8;
  flex: none;
}
.section {
  height: 28px;
  border-bottom: 2px solid #d0d0d0;
  box-sizing: border-box;
  display: flex;
  align-items: center;
  justify-content: space-between;
  padding: 0 5px 0 7px;
  font-size: 18px;
  color: #1a7fa8;
  flex: none;
}
.work {
  flex: 1;
  display: flex;
  flex-direction: column;
  min-width: 0;
}
.doc-tabs {
  height: 24px;
  flex: none;
  display: flex;
  border-bottom: 2px solid #539fb9;
}
.doc-tab {
  width: 153px;
  background: #539fb9;
  color: #fff;
  font-size: 15.500px;
  display: flex;
  align-items: center;
  padding-left: 7px;
  box-sizing: border-box;
  white-space: nowrap;
}
.doc-icon {
  margin-right: 10px;
}
.doc-mark {
  margin: 0 4px 0 6px;
}
.viewport {
  flex: 1;
  position: relative;
  overflow: hidden;
  background: linear-gradient(#b4b6b8, #e6e7e9 80%);
}
.scene {
  position: absolute;
  left: 0;
  top: 0;
  display: block;
}
.dialog {
  position: absolute;
  left: 305px;
  top: 219px;
  width: 479px;
  height: 132px;
  box-sizing: border-box;
  background: #f0f0f0;
  border: 1px solid #a8a8a8;
  border-top: 0;
  font-size: 15px;
}
.dialog-title {
  height: 33px;
  margin: 0 -1px;
  padding-left: 9px;
  line-height: 35px;
  background: #539fb9;
  color: #fff;
}
.dialog-body {
  display: flex;
  padding: 9px 0 0 17px;
}
.err {
  display: block;
  flex: none;
}
.dialog-text {
  margin-left: 21px;
  line-height: 20px;
  padding-top: 2px;
  white-space: nowrap;
}
.dialog-actions {
  display: flex;
  justify-content: flex-start;
  padding-left: 196px;
  margin-top: 9px;
}
.ok {
  width: 83px;
  height: 28px;
  padding: 2px;
  border: 0;
  background: #72b2c8;
  color: #fff;
  font: inherit;
}
.ok span {
  display: block;
  height: 100%;
  line-height: 22px;
  border: 1px dotted #111;
  box-sizing: border-box;
}
.status {
  height: 23px;
  line-height: 23px;
  padding-left: 3px;
  font-weight: 700;
  font-size: 14px;
  word-spacing: 3px;
  background: #fff;
  flex: none;
  white-space: nowrap;
}
.taskbar {
  height: 20px;
  background: #0a0c10;
  position: relative;
  flex: none;
  overflow: hidden;
}
.tk {
  position: absolute;
  top: 0;
}
.tk-app {
  position: absolute;
  top: 0;
  height: 20px;
}
.tk-app.mail {
  left: 252px;
  width: 51px;
  background: linear-gradient(90deg, #3a6b3a 0 18px, #2a2c30 18px);
  padding-left: 10px;
  box-sizing: border-box;
}
.tk-app.nxapp {
  left: 309px;
  width: 60px;
  background: #3f4144;
  padding-left: 13px;
  box-sizing: border-box;
}
</style>
